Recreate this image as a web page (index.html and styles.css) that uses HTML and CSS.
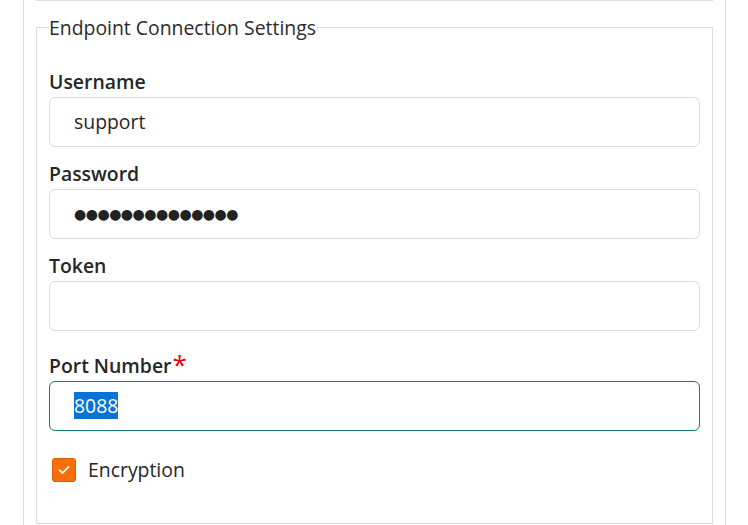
FILE: index.html
```html
<!DOCTYPE html>
<html>
<head>
<meta charset="utf-8">
<link rel="stylesheet" href="styles.css">
</head>
<body>
<div class="panel">
  <div class="prev"></div>
  <fieldset class="group">
    <legend class="group-title">Endpoint Connection Settings</legend>
    <div class="field">
      <label class="field-label">Username</label>
      <div class="input"><span class="value">support</span></div>
    </div>
    <div class="field">
      <label class="field-label">Password</label>
      <div class="input"><span class="dots">●●●●●●●●●●●●●●</span></div>
    </div>
    <div class="field">
      <label class="field-label">Token</label>
      <div class="input"></div>
    </div>
    <div class="field">
      <label class="field-label field-label-req">Port Number<span class="req">*</span></label>
      <div class="input input-focus"><span class="value"><span class="sel">8088</span></span></div>
    </div>
    <div class="check-row">
      <span class="checkbox"><svg width="14" height="14" viewBox="0 0 14 14"><path d="M2.5 7.2 L5.6 10 L11.5 3.8" fill="none" stroke="#fff" stroke-width="1.8" stroke-linecap="round" stroke-linejoin="round"/></svg></span>
      <span class="check-label">Encryption</span>
    </div>
  </fieldset>
</div>
</body>
</html>
```

FILE: styles.css
```css
html, body {
  margin: 0;
  padding: 0;
  background: #fff;
}
body {
  font-family: "Open Sans", "Liberation Sans", sans-serif;
  color: #262626;
}
.panel {
  margin: 0 22px 0 23px;
  border-left: 1px solid #dcdcdc;
  border-right: 1px solid #dcdcdc;
  padding: 0 12px;
  height: 525px;
  box-sizing: border-box;
}
.prev {
  height: 1px;
  background: #dcdcdc;
}
.group {
  margin: 13px 0 0 0;
  border: 1px solid #dcdcdc;
  padding: 26px 12px 40px 12px;
  min-width: 0;
}
.group-title {
  padding: 0;
  font-size: 19.4px;
  line-height: 27px;
  color: #2b2b2b;
}
.field {
  display: flex;
  flex-direction: column;
  margin-bottom: 12px;
}
.field-label {
  font-size: 19.4px;
  font-weight: 600;
  line-height: 30px;
  color: #262626;
}
.field-label-req {
  padding-top: 8px;
}
.req {
  color: #f00000;
  font-size: 26px;
  font-weight: 400;
  line-height: 20px;
  vertical-align: top;
  position: relative;
  top: 3px;
  margin-left: 1px;
}
.input {
  height: 50px;
  box-sizing: border-box;
  border: 1px solid #dadada;
  border-radius: 6px;
  padding: 0 24px;
  display: flex;
  align-items: center;
  font-size: 19.4px;
  color: #262626;
}
.input-focus {
  border-color: #0f7d72;
}
.value {
  line-height: 26px;
}
.sel {
  background: #0a74d6;
  color: #fff;
}
.dots {
  font-family: "DejaVu Sans", sans-serif;
  font-size: 14px;
  letter-spacing: -0.5px;
  color: #222;
}
.check-row {
  display: flex;
  align-items: center;
  margin-top: 26px;
  padding-left: 3px;
}
.checkbox {
  width: 24px;
  height: 24px;
  box-sizing: border-box;
  background: #f76e0a;
  border: 1px solid #d85c00;
  border-radius: 3px;
  display: flex;
  align-items: center;
  justify-content: center;
}
.check-label {
  margin-left: 12px;
  font-size: 19.4px;
  line-height: 26px;
  color: #262626;
}
```
